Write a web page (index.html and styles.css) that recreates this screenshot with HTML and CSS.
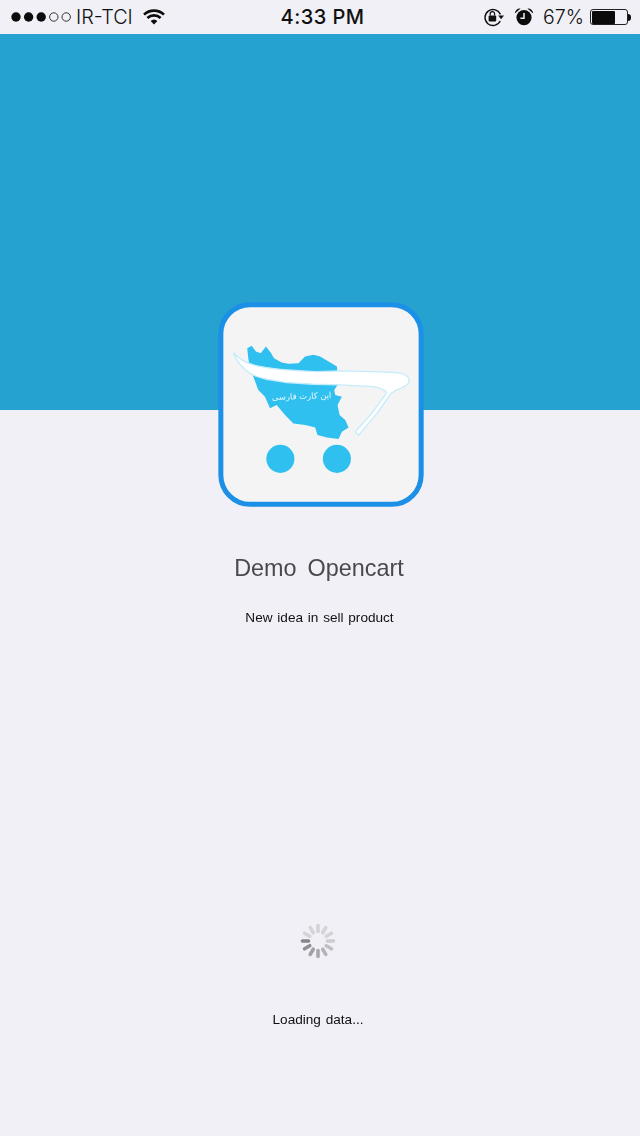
FILE: index.html
```html
<!DOCTYPE html>
<html lang="en">
<head>
<meta charset="utf-8">
<title>Demo Opencart</title>
<link rel="stylesheet" href="styles.css">
</head>
<body>
<div class="screen">
  <header class="status">
    <div class="status-left">
      <svg class="signal" width="60" height="12" viewBox="0 0 60 12">
        <circle cx="5" cy="6" r="4.7"/><circle cx="17.6" cy="6" r="4.7"/><circle cx="30.2" cy="6" r="4.7"/>
        <circle class="off" cx="42.8" cy="6" r="4.2"/><circle class="off" cx="55.2" cy="6" r="4.2"/>
      </svg>
      <span class="carrier">IR-TCI</span>
      <svg class="wifi" width="22" height="16" viewBox="0 0 22 16">
        <path d="M1 5.6 A14.5 14.5 0 0 1 21 5.6" class="arc"/>
        <path d="M4.4 9 A9.5 9.5 0 0 1 17.6 9" class="arc"/>
        <path d="M7.6 12 L11 15.6 L14.4 12 A5 5 0 0 0 7.6 12Z"/>
      </svg>
    </div>
    <div class="time">4:33 PM</div>
    <div class="status-right">
      <svg class="lock" width="22" height="20" viewBox="0 0 22 20">
        <path d="M17.2 14 A8 8 0 1 1 17.4 7.5" class="ring"/>
        <path d="M15.2 8.6 L21 8.6 L18.1 12.2Z"/>
        <rect x="5.6" y="8.6" width="7.6" height="6" rx="1"/>
        <path d="M7.2 8.6 V6.8 A2.2 2.2 0 0 1 11.6 6.8 V8.6" class="ring thin"/>
      </svg>
      <svg class="alarm" width="20" height="20" viewBox="0 0 20 20">
        <circle cx="10" cy="10.6" r="7.6"/>
        <path d="M0.8 6.4 A5 5 0 0 1 6.6 1.6 Z M19.2 6.4 A5 5 0 0 0 13.4 1.6 Z"/>
        <path d="M10 6 V11.2 H6.4" class="hands"/>
      </svg>
      <span class="percent">67%</span>
      <div class="battery"><div class="battery-level"></div></div>
      <div class="battery-nub"></div>
    </div>
  </header>

  <div class="hero"></div>

  <main class="content">
    <svg class="logo" width="206" height="205" viewBox="25 22 615 613" aria-label="Logo">
      <rect class="logo-plate" x="33" y="30" width="599" height="597" rx="88"/>
      <path class="logo-blue" d="M112 160 L125 153 L138 170 L152 175 L168 155 L182 173 L192 190 L215 203 L235 207 L265 205 L285 185 L310 180 L330 185 L350 197 L380 215 L382 235 L382 270 L372 285 L375 300 L395 305 L382 330 L388 360 L405 375 L415 397 L395 410 L385 432 L350 427 L322 420 L315 397 L285 390 L250 385 L225 360 L200 330 L180 340 L165 305 L145 285 L132 250 L120 220 L115 190 Z"/>
      <path class="logo-swoosh" d="M70 173 C85 190 105 203 130 210 C165 220 240 227 320 230 L390 228 L490 230 L560 233 C580 236 595 242 596 255 C597 266 590 272 560 285 C548 291 540 297 535 305 L500 355 L445 420 L435 410 L480 360 L525 300 C530 291 527 286 520 285 C510 279 500 276 490 275 L390 270 L310 268 L230 263 L170 253 C145 247 130 242 120 235 C100 222 80 200 70 173 Z"/>
      <text class="logo-text" x="275" y="312" transform="rotate(-2 275 312)">این کارت فارسی</text>
      <circle class="logo-blue" cx="211" cy="491" r="42"/>
      <circle class="logo-blue" cx="380" cy="491" r="42"/>
    </svg>
    <h1 class="title">Demo Opencart</h1>
    <p class="tagline">New idea in sell product</p>
    <svg class="spinner" width="36" height="36" viewBox="-18 -18 36 36">
      <line class="t1" y1="-9.5" y2="-15.5" transform="rotate(270)"/>
      <line class="t2" y1="-9.5" y2="-15.5" transform="rotate(240)"/>
      <line class="t3" y1="-9.5" y2="-15.5" transform="rotate(210)"/>
      <line class="t4" y1="-9.5" y2="-15.5" transform="rotate(180)"/>
      <line class="t5" y1="-9.5" y2="-15.5" transform="rotate(150)"/>
      <line class="t6" y1="-9.5" y2="-15.5" transform="rotate(120)"/>
      <line class="t7" y1="-9.5" y2="-15.5" transform="rotate(90)"/>
      <line class="t8" y1="-9.5" y2="-15.5" transform="rotate(60)"/>
      <line class="t8" y1="-9.5" y2="-15.5" transform="rotate(30)"/>
      <line class="t8" y1="-9.5" y2="-15.5"/>
      <line class="t8" y1="-9.5" y2="-15.5" transform="rotate(-30)"/>
      <line class="t8" y1="-9.5" y2="-15.5" transform="rotate(-60)"/>
    </svg>
    <p class="loading">Loading data...</p>
  </main>
</div>
</body>
</html>
```
FILE: styles.css
```css
* { box-sizing: border-box; }
html, body { margin: 0; padding: 0; }
body { background: #f0f0f6; font-family: "Liberation Sans", Arial, sans-serif; }
.screen { width: 640px; height: 1136px; overflow: hidden; display: flex; flex-direction: column; }

.status {
  height: 34px;
  flex: none;
  display: grid;
  grid-template-columns: 1fr auto 1fr;
  align-items: center;
  padding: 0 9px 0 11px;
  color: #111;
  font-family: Inter, "Liberation Sans", sans-serif;
}
.status-left, .status-right { display: flex; align-items: center; }
.status-right { justify-content: flex-end; }
.signal { fill: #0c0c0c; margin-right: 5px; }
.signal .off { fill: none; stroke: #333; stroke-width: 1; }
.carrier { font-size: 19.8px; font-weight: 300; margin-right: 10px; }
.wifi { fill: #0c0c0c; }
.wifi .arc { fill: none; stroke: #0c0c0c; stroke-width: 2.6; }
.time { font-size: 20px; font-weight: 500; letter-spacing: 0.45px; margin-left: 3px; }
.lock { fill: #111; margin-right: 9px; }
.lock .ring { fill: none; stroke: #111; stroke-width: 1.4; }
.lock .thin { stroke-width: 1.2; }
.alarm { fill: #0c0c0c; margin-right: 9px; }
.alarm .hands { fill: none; stroke: #f0f0f6; stroke-width: 1.5; }
.percent { font-size: 19.5px; font-weight: 300; margin-right: 6px; }
.battery { width: 38px; height: 16px; border: 1.5px solid #222; border-radius: 3px; padding: 0.5px; }
.battery-level { width: 66%; height: 100%; background: #0a0a0a; border-radius: 1px; }
.battery-nub { width: 3px; height: 7px; background: #111; border-radius: 0 3px 3px 0; }

.hero { height: 376px; flex: none; background: #26a2d1; }

.content { display: flex; flex-direction: column; align-items: center; flex: 1; }
.logo { margin-top: -108px; margin-left: 1px; flex: none; filter: blur(0.6px); }
.logo-plate { fill: #f4f4f4; stroke: #1c8fe6; stroke-width: 15; }
.logo-blue { fill: #2fc0f0; }
.logo-swoosh { fill: #fff; stroke: #c6ecfa; stroke-width: 4; }
.logo-text { font-family: "DejaVu Sans", sans-serif; font-size: 25px; fill: #eef9fe; direction: rtl; text-anchor: middle; }

.title { margin: 46px 0 0 -2px; font-size: 23.4px; line-height: 30px; font-weight: 400; color: #4a4a4e; word-spacing: 4.5px; filter: blur(0.3px); }
.tagline { margin: 26px 0 0 -1px; font-size: 13.6px; line-height: 18px; color: #111; word-spacing: 1px; filter: blur(0.3px); }
.spinner { margin-top: 296px; margin-left: -5px; flex: none; filter: blur(0.7px); }
.spinner line { stroke-width: 3.6; stroke-linecap: round; stroke: #97979c; }
.spinner .t1 { stroke: #85858a; }
.spinner .t2 { stroke: #8f8f94; }
.spinner .t3 { stroke: #a0a0a5; }
.spinner .t4 { stroke: #a8a8ad; }
.spinner .t5 { stroke: #b4b4b8; }
.spinner .t6 { stroke: #c0c0c4; }
.spinner .t7 { stroke: #cdcdd0; }
.spinner .t8 { stroke: #d4d4d7; }
.loading { margin: 52px 0 0 -4px; font-size: 13.6px; line-height: 18px; color: #111; word-spacing: 1px; filter: blur(0.3px); }
```
